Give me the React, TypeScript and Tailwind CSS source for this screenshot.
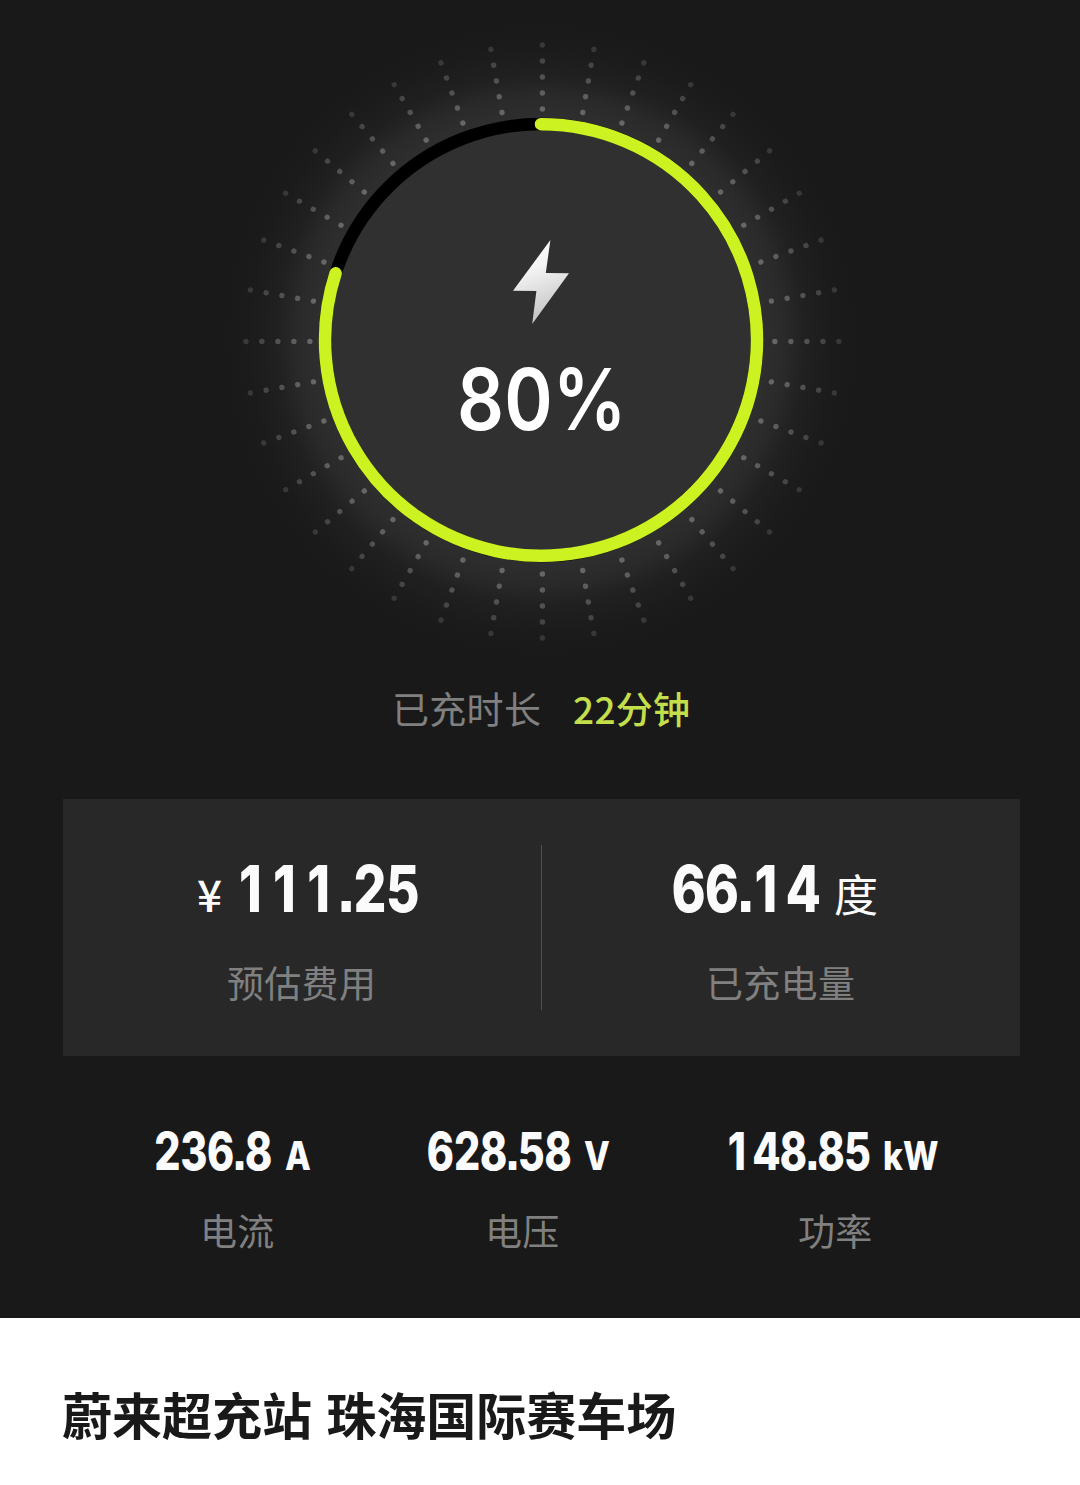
import React from "react";

const SPOKES = Array.from({ length: 36 }, (_, i) => i * 10);
const DOTS = [
  { r: 232.5, o: 0.28 },
  { r: 248.5, o: 0.25 },
  { r: 264.5, o: 0.22 },
  { r: 280.5, o: 0.18 },
  { r: 296.5, o: 0.13 },
];

function Gauge() {
  return (
    <svg className="block h-[680px] w-full" viewBox="0 0 1080 680">
      <defs>
        <radialGradient id="glow" gradientUnits="userSpaceOnUse" cx="541" cy="340" r="320">
          <stop offset="0" stopColor="#303030" />
          <stop offset="0.7" stopColor="#2e2e2e" />
          <stop offset="0.76" stopColor="#2a2a2a" />
          <stop offset="0.83" stopColor="#202020" />
          <stop offset="0.92" stopColor="#1b1b1b" />
          <stop offset="1" stopColor="#191919" />
        </radialGradient>
        <linearGradient id="bolt" x1="0" y1="0" x2="0.25" y2="1">
          <stop offset="0" stopColor="#ffffff" />
          <stop offset="0.4" stopColor="#f4f4f4" />
          <stop offset="1" stopColor="#c4c4c4" />
        </linearGradient>
      </defs>
      <circle cx="541" cy="340" r="320" fill="url(#glow)" />
      {SPOKES.map((deg) => (
        <g key={deg} transform={`rotate(${deg} 542.4 341.5)`}>
          {DOTS.map((d) => (
            <circle key={d.r} cx="542.4" cy={341.5 - d.r} r="2.7" fill="#fff" fillOpacity={d.o} />
          ))}
        </g>
      ))}
      <circle cx="541" cy="340" r="216" fill="#303030" stroke="#000" strokeWidth="12.5" />
      <path
        d="M541 124.2 A216 215.8 0 1 1 335.6 273.3"
        fill="none"
        stroke="#cdf221"
        strokeWidth="12.5"
        strokeLinecap="round"
      />
      <path d="M550.4 240 L545.8 273 L569 273.3 L532.2 324 L536.4 291 L513 290.8 Z" fill="url(#bolt)" />
      <text
        transform="translate(541.8 430) scale(0.86 1)"
        textAnchor="middle"
        fill="#fff"
        className="font-['Inter',sans-serif] text-[85.5px] font-semibold"
      >
        80%
      </text>
    </svg>
  );
}

// Condensed numerals: the inner span is narrowed inside a box of fixed width,
// and the plain, footless "1" sits in a cell as wide as the other digits.
function Digits({ children, className }: { children: string; className: string }) {
  return (
    <span className={`inline-block whitespace-nowrap font-['Inter',sans-serif] font-extrabold ${className}`}>
      <span className="inline-block origin-left scale-x-[0.795] [font-feature-settings:'tnum','ss07']">
        {children.split(/(1)/).filter(Boolean).map((part, i) =>
          part === "1" ? (
            <span key={i} className="inline-block w-[0.66em] pr-[0.14em] text-center [font-feature-settings:normal]">
              1
            </span>
          ) : (
            part
          ),
        )}
      </span>
    </span>
  );
}

function Unit({ children }: { children: string }) {
  return (
    <span className="inline-block origin-left scale-x-[0.86] font-['Inter',sans-serif] text-[39px] leading-[70px] font-extrabold">
      {children}
    </span>
  );
}

function Label({ children, className }: { children: string; className: string }) {
  return (
    <div className={`text-[37px] leading-[44px] tracking-[0.3px] text-[#808080] ${className}`}>{children}</div>
  );
}

export default function App() {
  return (
    <div className="flex h-[1485px] w-[1080px] flex-col overflow-hidden bg-white font-['Noto_Sans_CJK_SC',sans-serif]">
      <div className="h-[1318px] bg-[#191919]">
        <Gauge />
        <div className="-mt-0.5 flex h-[60px] items-center pl-[392px] text-[37px] leading-[60px] tracking-[0.3px]">
          <span className="w-[181px] text-[#808080]">已充时长</span>
          <span className="font-medium text-[#c3de4a]">22分钟</span>
        </div>

        <div className="mt-[61px] ml-[63px] flex h-[257px] w-[957px] items-start bg-[#282828]">
          <div className="w-[478px]">
            <div className="flex h-[94px] items-baseline pt-[50px] pl-[134px] leading-[80px] text-[#fbfbfb]">
              <span className="w-[40px] text-[44px] font-medium leading-none">¥</span>
              <Digits className="w-[190px] text-[65px] leading-[80px]">111.25</Digits>
            </div>
            <Label className="mt-[67px] pl-[164px]">预估费用</Label>
          </div>
          <div className="mt-[46px] h-[165px] w-px bg-[#505050]" />
          <div className="w-[478px]">
            <div className="flex h-[94px] items-baseline pt-[50px] pl-[130px] leading-[80px] text-[#fbfbfb]">
              <Digits className="w-[162px] text-[65px] leading-[80px]">66.14</Digits>
              <span className="text-[44px] leading-none">度</span>
            </div>
            <Label className="mt-[67px] pl-[164px]">已充电量</Label>
          </div>
        </div>

        <div className="mt-[61px] flex pl-[154px] text-[#fbfbfb]">
          <div className="w-[273px]">
            <div className="flex items-baseline">
              <Digits className="w-[131px] text-[52px] leading-[70px]">236.8</Digits>
              <Unit>A</Unit>
            </div>
            <Label className="mt-[17px] pl-[46px]">电流</Label>
          </div>
          <div className="w-[299px]">
            <div className="flex items-baseline">
              <Digits className="w-[157px] text-[52px] leading-[70px]">628.58</Digits>
              <Unit>V</Unit>
            </div>
            <Label className="mt-[17px] pl-[58px]">电压</Label>
          </div>
          <div>
            <div className="flex items-baseline">
              <Digits className="w-[157px] text-[52px] leading-[70px]">148.85</Digits>
              <Unit>kW</Unit>
            </div>
            <Label className="mt-[17px] pl-[72px]">功率</Label>
          </div>
        </div>
      </div>
      <div className="flex flex-1 items-start pt-[60px] pl-[62px]">
        <h1 className="text-[50px] leading-[70px] font-bold text-[#191919] [word-spacing:3px]">
          蔚来超充站 珠海国际赛车场
        </h1>
      </div>
    </div>
  );
}
